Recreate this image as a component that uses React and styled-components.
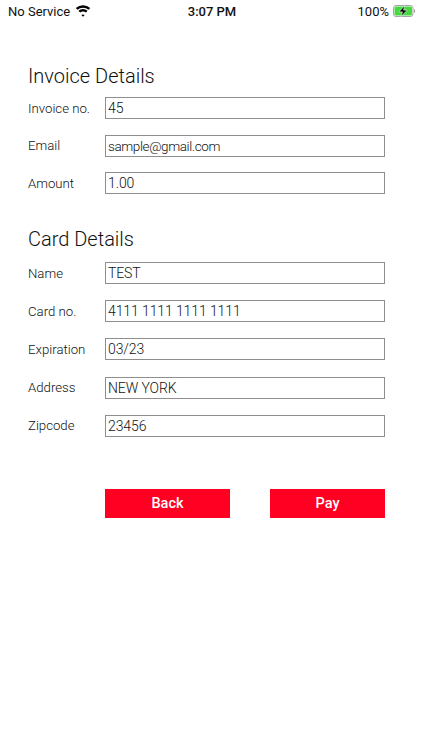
import React from "react";
import styled, { createGlobalStyle } from "styled-components";

const GlobalStyle = createGlobalStyle`
  html, body {
    margin: 0;
    padding: 0;
    background: #fff;
  }
  body {
    font-family: Roboto, "Liberation Sans", Arial, sans-serif;
    color: #222;
  }
`;

const Page = styled.div`
  width: 422px;
  height: 750px;
  overflow: hidden;
  background: #fff;
`;

const StatusBar = styled.div`
  display: grid;
  grid-template-columns: 1fr auto 1fr;
  align-items: center;
  height: 22px;
  padding: 0 6px 0 8px;
  font-size: 13px;
  color: #111;
`;

const StatusLeft = styled.div`
  display: flex;
  align-items: center;
  gap: 5px;
`;

const StatusTime = styled.div`
  font-weight: 500;
`;

const StatusRight = styled.div`
  display: flex;
  align-items: center;
  justify-content: flex-end;
  gap: 4px;
`;

const Content = styled.div`
  padding: 42px 37px 0 28px;
`;

const SectionTitle = styled.h2`
  margin: 0;
  height: 24px;
  font-size: 20px;
  line-height: 24px;
  font-weight: 300;
  color: #111;
`;

const Fields = styled.div`
  display: flex;
  flex-direction: column;
  gap: ${(p) => p.$gap}px;
  margin-top: ${(p) => p.$top}px;
`;

const Field = styled.label`
  display: grid;
  grid-template-columns: 77px 1fr;
  align-items: center;
  height: 22px;
`;

const FieldLabel = styled.span`
  font-size: 13.2px;
  font-weight: 300;
  color: #111;
`;

const FieldValue = styled.div`
  box-sizing: border-box;
  height: 22px;
  padding: 0 2px;
  border: 1px solid #8e8e8e;
  font-size: ${(p) => (p.$email ? 13.5 : 14)}px;
  letter-spacing: ${(p) => (p.$email ? -0.4 : -0.1)}px;
  font-weight: 300;
  line-height: 20px;
  color: #111;
`;

const InvoiceFields = styled(Fields)`
  margin-bottom: 33px;
`;

const Actions = styled.div`
  display: flex;
  justify-content: space-between;
  margin: 52px 0 0 77px;
`;

const ActionButton = styled.button`
  width: ${(p) => p.$width}px;
  height: 29px;
  padding: 0;
  border: 0;
  background: #ff0022;
  color: #fff;
  font-family: inherit;
  font-size: 14.5px;
  font-weight: 500;
`;

const WifiIcon = () => (
  <svg width="16" height="12" viewBox="0 0 16 12" aria-hidden="true">
    <path
      fill="#000"
      d="M8 2.700c2.100 0 4 .8 5.500 2.100l1.700-1.800A10.600 10.600 0 0 0 8 .2 10.600 10.600 0 0 0 .8 3l1.700 1.800A8.200 8.200 0 0 1 8 2.700Zm0 3.700c1.100 0 2.100.4 2.900 1.050l1.700-1.750A7 7 0 0 0 8 3.900a7 7 0 0 0-4.600 1.800l1.700 1.750A4.500 4.500 0 0 1 8 6.400Zm0 3c-.7 0-1.250.2-1.700.6L8 11.800 9.700 10c-.45-.4-1-.6-1.700-.6Z"
    />
  </svg>
);

const BatteryIcon = () => (
  <svg width="23" height="12" viewBox="0 0 23 12" aria-hidden="true">
    <rect x="0.5" y="0.5" width="19.500" height="11" rx="2.500" fill="none" stroke="#a5a5a5" />
    <rect x="1.500" y="1.500" width="17.500" height="9" rx="1.500" fill="#43d93f" />
    <path d="M21 4.200v3.600c.7-.2 1.200-.9 1.200-1.800S21.700 4.400 21 4.200Z" fill="#999" />
    <path d="M11.800.4 5.800 6.900h3.600L8.200 11.600l6-6.500h-3.600L11.800.4Z" fill="#000" stroke="#fff" strokeWidth="0.6" />
  </svg>
);

const invoiceFields = [
  ["Invoice no.", "45"],
  ["Email", "sample@gmail.com"],
  ["Amount", "1.00"],
];

const cardFields = [
  ["Name", "TEST"],
  ["Card no.", "4111 1111 1111 1111"],
  ["Expiration", "03/23"],
  ["Address", "NEW YORK"],
  ["Zipcode", "23456"],
];

const renderField = ([label, value]) => (
  <Field key={label}>
    <FieldLabel>{label}</FieldLabel>
    <FieldValue $email={label === "Email"}>{value}</FieldValue>
  </Field>
);

const App = () => {
  return (
    <Page>
      <GlobalStyle />
      <StatusBar>
        <StatusLeft>
          No Service
          <WifiIcon />
        </StatusLeft>
        <StatusTime>3:07 PM</StatusTime>
        <StatusRight>
          100%
          <BatteryIcon />
        </StatusRight>
      </StatusBar>
      <Content>
        <SectionTitle>Invoice Details</SectionTitle>
        <InvoiceFields $top={9} $gap={15.5}>
          {invoiceFields.map(renderField)}
        </InvoiceFields>
        <SectionTitle>Card Details</SectionTitle>
        <Fields $top={11} $gap={16.2}>
          {cardFields.map(renderField)}
        </Fields>
        <Actions>
          <ActionButton $width={125}>Back</ActionButton>
          <ActionButton $width={115}>Pay</ActionButton>
        </Actions>
      </Content>
    </Page>
  );
};

export default App;
